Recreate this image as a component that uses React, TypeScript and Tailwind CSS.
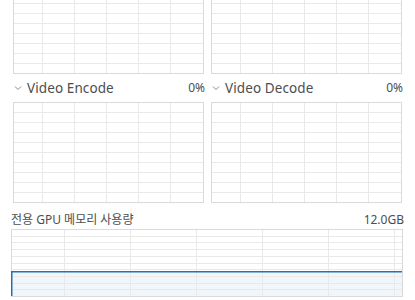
const FONT = "font-['Noto_Sans','Noto_Sans_CJK_KR',sans-serif]";

interface GridProps {
  width: number;
  height: number;
  rows: number;
  colOffset: number;
  colStep: number;
  level?: number;
}

function ChartGrid({ width, height, rows, colOffset, colStep, level }: GridProps) {
  const rowStep = (height - 1) / rows;
  const hLines: number[] = [];
  for (let i = 1; i < rows; i++) hLines.push(Math.round(i * rowStep) + 0.5);
  const vLines: number[] = [];
  for (let x = colOffset; x < width - 2; x += colStep) vLines.push(Math.round(x) + 0.5);

  return (
    <svg width={width} height={height} className="block shrink-0">
      {level !== undefined && (
        <rect x={0} y={level} width={width - 1} height={height - level} fill="#f1f6fa" />
      )}
      {hLines.map((y) => (
        <line key={"h" + y} x1={0} x2={width} y1={y} y2={y} stroke="#e9e9e9" />
      ))}
      {vLines.map((x) => (
        <line key={"v" + x} x1={x} x2={x} y1={0} y2={height} stroke="#e9e9e9" />
      ))}
      <rect x={0.5} y={0.5} width={width - 1} height={height - 1} fill="none" stroke="#dadada" />
      {level !== undefined && (
        <>
          <line x1={0} x2={width - 1} y1={level + 0.75} y2={level + 0.75} stroke="#2371b0" strokeWidth={1.5} />
          <line x1={0.75} x2={0.75} y1={level} y2={height - 1} stroke="#2371b0" strokeWidth={1.5} />
        </>
      )}
    </svg>
  );
}

function Chevron() {
  return (
    <svg width="8" height="6" viewBox="0 0 8 6" className="shrink-0">
      <polyline points="1,1.5 4,4.5 7,1.5" fill="none" stroke="#8a8a8a" strokeWidth="1" />
    </svg>
  );
}

function EngineHeader({ label }: { label: string }) {
  return (
    <div className="flex h-[28px] w-[191px] items-center justify-between pl-[1px]">
      <div className="flex items-center gap-[5px]">
        <Chevron />
        <span className="text-[13.5px] tracking-[0.1px] text-[#4d4d4d]">{label}</span>
      </div>
      <span className="-mr-[1px] text-[12px] text-[#4d4d4d]">0%</span>
    </div>
  );
}

function SmallChart() {
  return <ChartGrid width={191} height={101} rows={10} colOffset={29} colStep={32} />;
}

export default function App() {
  return (
    <div className={`h-[300px] w-[415px] overflow-hidden bg-white ${FONT}`}>
      <div className="-mt-[27px] flex gap-[7px] pl-[13px]">
        <SmallChart />
        <SmallChart />
      </div>

      <div className="flex gap-[7px] pl-[13px]">
        <EngineHeader label="Video Encode" />
        <EngineHeader label="Video Decode" />
      </div>

      <div className="flex gap-[7px] pl-[13px]">
        <SmallChart />
        <SmallChart />
      </div>

      <div className="pl-[11px]">
        <div className="flex h-[26px] w-[392px] items-end justify-between pb-[3px]">
          <span className="text-[12px] leading-none text-[#4d4d4d]">전용 GPU 메모리 사용량</span>
          <span className="-mr-[1px] text-[12px] leading-none text-[#4d4d4d]">12.0GB</span>
        </div>
        <ChartGrid width={392} height={68} rows={10} colOffset={53} colStep={66} level={42} />
      </div>
    </div>
  );
}
